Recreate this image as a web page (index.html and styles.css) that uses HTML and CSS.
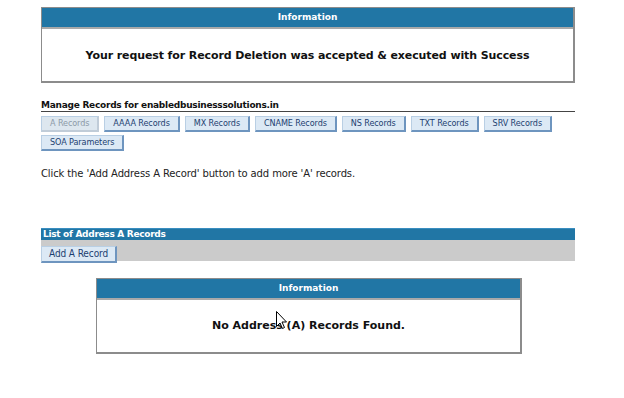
FILE: index.html
```html
<!DOCTYPE html>
<html>
<head>
<meta charset="utf-8">
<link rel="stylesheet" href="styles.css">
</head>
<body>
<div class="page">
  <div class="info info-top">
    <div class="info-head">Information</div>
    <div class="info-body big">Your request for Record Deletion was accepted &amp; executed with Success</div>
  </div>

  <div class="manage-title">Manage Records for enabledbusinesssolutions.in</div>
  <div class="tabs">
    <span class="btn disabled">A Records</span>
    <span class="btn">AAAA Records</span>
    <span class="btn">MX Records</span>
    <span class="btn">CNAME Records</span>
    <span class="btn">NS Records</span>
    <span class="btn">TXT Records</span>
    <span class="btn">SRV Records</span>
    <span class="btn">SOA Parameters</span>
  </div>

  <p class="hint">Click the 'Add Address A Record' button to add more 'A' records.</p>

  <div class="list-head">List of Address A Records</div>
  <div class="toolbar"><span class="btn btn-lg">Add A Record</span></div>

  <div class="info info-inner">
    <div class="info-head">Information</div>
    <div class="info-body small">No Address (A) Records Found.</div>
    <svg class="cursor" width="12" height="19" viewBox="0 0 12 19"><path d="M0.5 0.5 L0.5 15.5 L4 12 L6.5 17.5 L8.5 16.5 L6 11 L10.5 11 Z" fill="#fff" stroke="#000" stroke-width="1"/></svg>
  </div>
</div>
</body>
</html>
```
FILE: styles.css
```css
html, body { margin: 0; padding: 0; background: #fff; }
body { font-family: "DejaVu Sans", Verdana, sans-serif; color: #111; }
.page { margin-left: 41px; width: 534px; padding-top: 7px; }

.info { border: 1px solid #8c8c8c; border-right-width: 2px; border-bottom-width: 2px; background: #fff; position: relative; }
.info-head { background: #2176a5; color: #fff; font-weight: bold; font-size: 9px; text-align: center; height: 19px; line-height: 19px; border-bottom: 2px solid #a9a9a9; }
.info-body { text-align: center; font-weight: bold; }
.info-top .info-body.big { font-size: 11px; letter-spacing: -0.1px; height: 52px; line-height: 54px; }
.info-inner { margin: 17px 0 0 55px; width: 423px; }
.info-inner .info-body.small { font-size: 11px; height: 52px; line-height: 52px; }

.manage-title { margin-top: 17px; font-size: 9px; font-weight: bold; letter-spacing: -0.25px; border-bottom: 1px solid #444; line-height: 11px; height: 11px; }

.tabs { display: flex; flex-wrap: wrap; gap: 3px 5px; margin-top: 4px; width: 534px; }
.btn { display: inline-block; font-family: "DejaVu Sans Condensed", Tahoma, sans-serif; font-size: 9px; letter-spacing: -0.1px; color: #1c3f70; background: #dce9f5; border: 1px solid #b9cfe4; border-right: 2px solid #6e95bf; border-bottom: 2px solid #6e95bf; padding: 0 8px; height: 13px; line-height: 13px; }
.btn.disabled { color: #8c9aa8; background: #dde7ef; border-right-color: #c0ccd8; border-bottom-color: #c0ccd8; }
.btn.btn-lg { font-size: 10px; padding: 0 7px; height: 14px; line-height: 14px; }

.hint { margin: 17px 0 0; font-size: 10px; letter-spacing: -0.12px; line-height: 12px; color: #222; }

.list-head { margin-top: 48px; background: #2176a5; color: #fff; font-weight: bold; font-size: 9px; letter-spacing: -0.3px; height: 11px; line-height: 11px; padding-left: 2px; border-top: 1px solid #3a8ec0; }
.toolbar { background: #cbcbcb; height: 19px; padding-top: 2px; }

.cursor { position: absolute; left: 179px; top: 32px; }
```
